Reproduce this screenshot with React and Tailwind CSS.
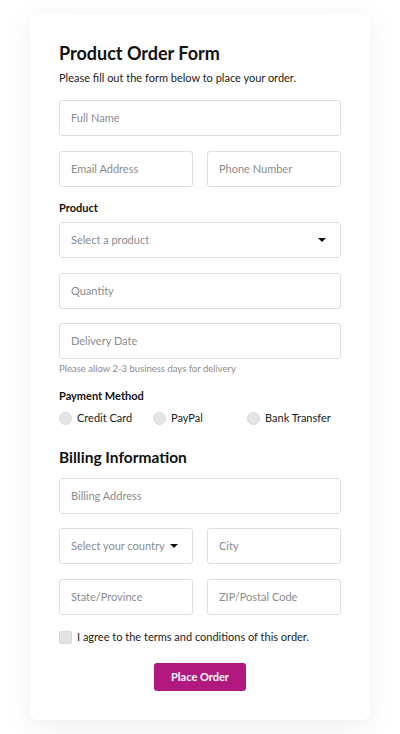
import React from "react";

const font = { fontFamily: 'Lato, "Noto Sans", sans-serif' };

function Field({ placeholder, className = "" }) {
  return (
    <div
      className={`h-9 border border-[#dedede] rounded-[3px] bg-white flex items-center px-[11px] text-[11px] text-[#8c8c8c] whitespace-nowrap ${className}`}
    >
      {placeholder}
    </div>
  );
}

function SelectField({ placeholder, className = "" }) {
  return (
    <div
      className={`h-9 border border-[#dedede] rounded-[3px] bg-white flex items-center justify-between pl-[11px] pr-[14px] text-[11px] text-[#8c8c8c] whitespace-nowrap ${className}`}
    >
      <span>{placeholder}</span>
      <span className="w-0 h-0 border-l-[4px] border-r-[4px] border-t-[4px] border-l-transparent border-r-transparent border-t-[#111]"></span>
    </div>
  );
}

function Radio({ label }) {
  return (
    <div className="flex items-center gap-[5px] whitespace-nowrap">
      <span className="w-[13px] h-[13px] rounded-full bg-[#e4e4e4] border border-[#d8d8d8]"></span>
      <span className="text-[11px] text-[#222]">{label}</span>
    </div>
  );
}

export default function App() {
  return (
    <div className="min-h-[734px] bg-white px-[30px] pt-[14px] pb-[14px]" style={font}>
      <div className="bg-white rounded-lg shadow-[0_6px_30px_rgba(0,0,0,0.07)] px-[29px] pt-[27px] pb-[29px] flex flex-col">
        <h1 className="text-[18px] leading-[24px] font-bold text-[#111]">Product Order Form</h1>
        <p className="mt-[5px] text-[11px] leading-[16px] text-[#222]">
          Please fill out the form below to place your order.
        </p>

        <Field placeholder="Full Name" className="mt-[14px]" />
        <div className="mt-[15px] grid grid-cols-2 gap-[14px]">
          <Field placeholder="Email Address" />
          <Field placeholder="Phone Number" />
        </div>

        <label className="mt-[13px] text-[11px] leading-[16px] font-bold text-[#111]">Product</label>
        <SelectField placeholder="Select a product" className="mt-[6px]" />
        <Field placeholder="Quantity" className="mt-[15px]" />
        <Field placeholder="Delivery Date" className="mt-[14px]" />
        <p className="mt-[3px] text-[9.5px] leading-[14px] text-[#8c8c8c]">
          Please allow 2-3 business days for delivery
        </p>

        <label className="mt-[12px] text-[11px] leading-[16px] font-bold text-[#111]">Payment Method</label>
        <div className="mt-[6px] grid grid-cols-3 h-4">
          <Radio label="Credit Card" />
          <Radio label="PayPal" />
          <Radio label="Bank Transfer" />
        </div>

        <h2 className="mt-[21px] text-[15.5px] leading-[20px] font-bold text-[#111]">Billing Information</h2>
        <Field placeholder="Billing Address" className="mt-[11px]" />
        <div className="mt-[14px] grid grid-cols-2 gap-[14px]">
          <SelectField placeholder="Select your country" />
          <Field placeholder="City" />
        </div>
        <div className="mt-[15px] grid grid-cols-2 gap-[14px]">
          <Field placeholder="State/Province" />
          <Field placeholder="ZIP/Postal Code" />
        </div>

        <div className="mt-[14px] flex items-center gap-[5px] h-4 whitespace-nowrap">
          <span className="w-[13px] h-[13px] rounded-[2px] bg-[#e4e4e4] border border-[#d8d8d8]"></span>
          <span className="text-[11px] text-[#222]">I agree to the terms and conditions of this order.</span>
        </div>

        <div className="mt-[18px] flex justify-center">
          <button className="h-7 w-[92px] rounded-[3px] bg-[#b1197f] text-white text-[11px] font-bold">
            Place Order
          </button>
        </div>
      </div>
    </div>
  );
}
